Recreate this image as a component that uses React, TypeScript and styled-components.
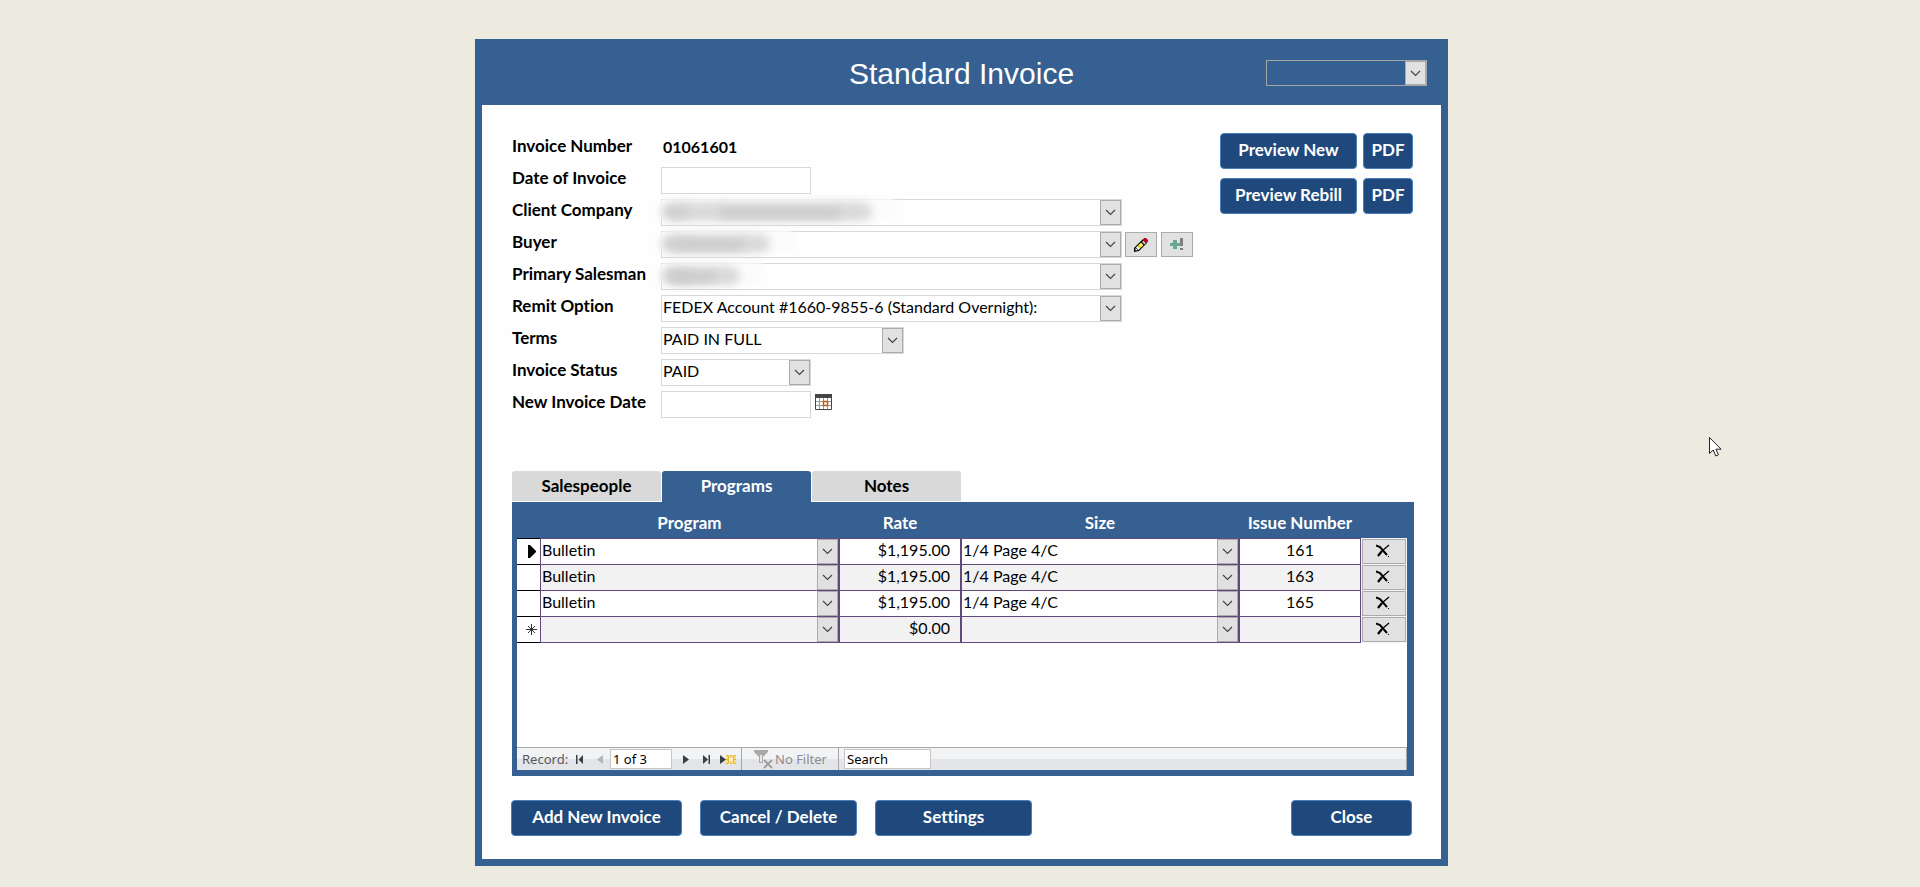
import React from "react";
import styled, { createGlobalStyle } from "styled-components";

const uiFont = `Lato, "Liberation Sans", sans-serif`;
const barFont = `"Noto Sans", "Open Sans", sans-serif`;
const blue = "#376092";
const purple = "#604a7b";

const GlobalStyle = createGlobalStyle`
  *, *::before, *::after { box-sizing: border-box; }
  body {
    margin: 0;
    background: #edeadf;
    color: #000;
    font-family: ${uiFont};
    font-size: 16px;
    font-variant-ligatures: none;
  }
  button, input, select { font: inherit; font-variant-ligatures: none; color: inherit; margin: 0; border-radius: 0; }
`;

const Page = styled.main`
  position: relative;
  min-height: 100vh;
  padding: 39px 0 21px 3px;
`;

const Frame = styled.section`
  width: 100%;
  max-width: 973px;
  margin: 0 auto;
  background: ${blue};
  padding: 0 7px 7px;
`;

const Header = styled.header`
  display: grid;
  grid-template-columns: 161px 1fr 161px;
  align-items: center;
  height: 66px;
  padding: 2px 14px 0;
`;

const Title = styled.h1`
  grid-column: 2;
  margin: 0;
  padding-top: 2px;
  text-align: center;
  color: #fff;
  font: 400 30px/34px "Liberation Sans", Arial, sans-serif;
`;

const Body = styled.div`
  background: #fefefe;
  padding: 28px 27px 23px 30px;
`;

const Top = styled.div`
  display: flex;
  justify-content: space-between;
  align-items: flex-start;
`;

const Fields = styled.form`
  display: grid;
  gap: 5px;
  padding-top: 2px;
`;

const FieldRow = styled.div`
  display: flex;
  align-items: center;
  height: 27px;
`;

const Label = styled.label`
  width: 149px;
  flex: none;
  font-size: 17px;
  font-weight: 700;
  line-height: 20px;
  padding-bottom: 5px;
`;

const Value = styled.output`
  font-weight: 700;
  padding: 0 0 4px 2px;
`;

const TextBox = styled.input`
  width: 150px;
  height: 27px;
  padding: 0 2px;
  border: 1px solid #d8d8d8;
  background: #fff;
`;

const ComboBox = styled.span<{ $width?: number; $tone?: "field" | "header" | "cell" }>`
  position: relative;
  display: grid;
  width: ${(p) => (p.$width ? `${p.$width}px` : "100%")};
  height: ${(p) => (p.$tone === "cell" ? 25 : p.$tone === "header" ? 26 : 27)}px;
  border: ${(p) => (p.$tone === "cell" ? "0" : p.$tone === "header" ? "1px solid #a6a6a6" : "1px solid #d8d8d8")};

  > * { grid-area: 1 / 1; }
`;

const Select = styled.select`
  appearance: none;
  width: 100%;
  height: 100%;
  padding: 0 22px 4px 1px;
  border: 0;
  background: transparent;
`;

const DropButton = styled.span`
  justify-self: end;
  display: grid;
  place-items: center;
  width: 21px;
  height: 100%;
  border: 1px solid #ababab;
  background: #e1e1e1;
  pointer-events: none;
`;

const Smudge = styled.svg`
  position: absolute;
  left: -16px;
  top: -14px;
  pointer-events: none;
`;

const ToolButton = styled.button`
  display: grid;
  place-items: center;
  width: 32px;
  height: 25px;
  margin-left: 3px;
  padding: 0;
  border: 1px solid #ababab;
  background: #e1e1e1;
  & + & { margin-left: 4px; }
`;

const CalendarButton = styled.button`
  display: grid;
  margin: 0 0 6px 4px;
  padding: 0;
  border: 0;
  background: none;
`;

const PreviewGrid = styled.div`
  display: grid;
  grid-template-columns: 137px 50px;
  gap: 9px 6px;
  margin: 0 1px 0 0;
`;

const ActionButton = styled.button<{ $width?: number }>`
  width: ${(p) => (p.$width ? `${p.$width}px` : "100%")};
  height: 36px;
  padding: 0 0 4px;
  border: 1px solid #4a7ebb;
  border-radius: 4px;
  background: #1f497d;
  color: #fff;
  font-size: 17px;
  font-weight: 700;
`;

const Tabs = styled.div`
  display: flex;
  gap: 1px;
  margin-top: 53px;
`;

const Tab = styled.button<{ $active?: boolean }>`
  width: 149px;
  height: ${(p) => (p.$active ? 31 : 30)}px;
  padding: 0 0 ${(p) => (p.$active ? 3 : 2)}px;
  border: 0;
  border-radius: 3px 3px 0 0;
  background: ${(p) => (p.$active ? blue : "#d9d9d9")};
  color: ${(p) => (p.$active ? "#fff" : "#000")};
  font-size: 17px;
  font-weight: 700;
`;

const Panel = styled.div`
  background: ${blue};
  padding: 0 7px 6px 5px;
`;

const Sheet = styled.div`
  min-height: 245px;
  background: linear-gradient(${blue} 36px, #fefefe 36px);
`;

const Grid = styled.table`
  width: 100%;
  table-layout: fixed;
  border-collapse: separate;
  border-spacing: 0;
`;

const HeadCell = styled.th<{ $width?: number }>`
  width: ${(p) => (p.$width ? `${p.$width}px` : "auto")};
  height: 36px;
  padding: 4px 0 0;
  color: #fff;
  font-size: 17px;
  font-weight: 700;
`;

const Row = styled.tr<{ $alt: boolean }>`
  background: ${(p) => (p.$alt ? "#f2f2f2" : "#fefefe")};
  &:first-child > td { border-top-width: 1px; }
`;

const Cell = styled.td`
  height: 25px;
  padding: 0;
  border: solid ${purple};
  border-width: 0 1px 1px;
`;

const SelectorCell = styled(Cell)`
  padding-left: 9px;
  border-color: #000;
  border-width: 0 0 1px;
  background: #fefefe;
`;

const DeleteCell = styled(Cell)`
  border-color: #f5f5f5;
`;

const CellInput = styled.input<{ $align: "right" | "center" }>`
  display: block;
  width: 100%;
  height: 25px;
  padding: 0 ${(p) => (p.$align === "right" ? "10px" : "0")} 4px 0;
  border: 0;
  background: transparent;
  text-align: ${(p) => p.$align};
`;

const DeleteButton = styled.button`
  display: grid;
  place-items: center;
  width: 100%;
  height: 25px;
  padding: 0 2px 2px 0;
  border: 1px solid #ababab;
  background: #e1e1e1;
`;

const RecordBar = styled.div`
  display: flex;
  align-items: center;
  height: 23px;
  padding-left: 5px;
  border: solid #a6a8ab;
  border-width: 1px 1px 0 0;
  background: linear-gradient(#f2f3f5 11px, #e4e5e9 11px);
  color: #55585c;
  font: 13px/18px ${barFont};
`;

const RecordText = styled.label`
  width: 54px;
`;

const NavButton = styled.button<{ $width: number; $indent?: number }>`
  display: grid;
  justify-content: start;
  align-items: center;
  width: ${(p) => p.$width}px;
  height: 20px;
  padding: 0 0 0 ${(p) => p.$indent ?? 0}px;
  border: 0;
  background: none;
`;

const BarInput = styled.input<{ $width: number }>`
  width: ${(p) => p.$width}px;
  height: 20px;
  padding: 0 2px;
  border: 1px solid #c6c6c6;
  background: #fefefe;
  color: #000;
  &::placeholder { color: #000; opacity: 1; }
`;

const FilterButton = styled.button`
  display: flex;
  align-items: center;
  gap: 1px;
  width: 98px;
  height: 22px;
  margin-right: 5px;
  padding: 0 0 0 12px;
  border: solid #a6a8ab;
  border-width: 0 1px;
  background: none;
  color: #8b8d90;
`;

const Footer = styled.footer`
  display: flex;
  gap: 18px;
  margin: 24px 2px 0 -1px;
  > :last-child { margin-left: auto; }
`;

const Pointer = styled.svg`
  position: absolute;
  left: 1709px;
  top: 437px;
`;

const Chevron = () => (
  <svg width="11" height="7" viewBox="0 0 11 7" fill="none" aria-hidden="true">
    <path d="M1 1 L5.5 5.5 L10 1" stroke="#444" strokeWidth="1.2" />
  </svg>
);

const Pencil = () => (
  <svg width="14" height="14" viewBox="0 0 14 14" aria-hidden="true">
    <path d="M0 10 L9 1 L13 5 L5 13 L0 14Z" fill="#000" />
    <path d="M1.500 10 L4 12 L1.500 12.500Z" fill="#fff" />
    <path d="M2 9.500 L3.500 8 L6 10.500 L4.500 12Z" fill="#fff" />
    <path d="M3.500 8 L7 4.500 L9.500 7 L6 10.500Z" fill="#f0e420" />
    <path d="M5 7.500 L7 5.500 L9 7.500 L8 8.500Z" fill="#fff36a" />
    <path d="M8 4 L9.500 2.500 L12 5 L10.500 6.500Z" fill="#c8c8d0" />
    <path d="M9 2 L10 0 H12 L14 2 V4 L12 5Z" fill="#c00014" />
  </svg>
);

const PlusBang = () => (
  <svg width="15" height="13" viewBox="0 0 15 13" aria-hidden="true">
    <path d="M3 2h4v3h3v3H7v3H3V8H0V5h3z" fill="#67a892" />
    <path d="M10 0h3v8h-3zM10 10h3v2h-3z" fill="#808080" />
  </svg>
);

const Calendar = () => (
  <svg width="17" height="16" viewBox="0 0 17 16" aria-hidden="true">
    <path d="M.5.5h16v15H.5z" fill="#fff" stroke="#444" />
    <path d="M0 0h17v4H0z" fill="#444" />
    <path d="M4.500 4v11M8.500 4v11M12.500 4v11M1 7.500h15M1 11.500h15" stroke="#999" />
    <path d="M8.500 7.500h4v4h-4z" fill="#fff" stroke="#c55a11" strokeWidth="1.500" />
  </svg>
);

const DeleteMark = () => (
  <svg width="14" height="14" viewBox="0 0 14 14" fill="none" stroke="#000" aria-hidden="true">
    <path d="M0 1.500 L4 3 L11 11" strokeWidth="2" />
    <path d="M13 1 L6 7" strokeWidth="1.2" />
    <path d="M6 7 L2 12" strokeWidth="2.2" />
    <path d="M12 12.500h1" />
  </svg>
);

const CurrentMark = () => (
  <svg width="12" height="13" viewBox="0 0 12 13" aria-hidden="true">
    <path d="M2 0h2l6 6v1l-6 6H2z" fill="#000" />
  </svg>
);

const NewMark = () => (
  <svg width="12" height="12" viewBox="0 0 12 12" stroke="#333" aria-hidden="true">
    <path d="M5.500 0v11M0 5.500h11M2 2l7 7M9 2l-7 7" />
  </svg>
);

const FilterMark = () => (
  <svg width="20" height="20" viewBox="0 0 20 20" aria-hidden="true">
    <path d="M0 1h14v2L9 8v6H5V8L0 3z" fill="#a9a9a9" />
    <path d="M6 6h2v7H6z" fill="#e8e8e8" />
    <path d="M10 11l8 8M18 11l-8 8" stroke="#a0a0a0" strokeWidth="2" />
  </svg>
);

type NavKind = "first" | "prev" | "next" | "last" | "new";
const navPaths: Record<NavKind, string> = {
  first: "M0 0h1.500v9H0zM7 0v9L2.500 4.500z",
  prev: "M6 0v9L0 4.500z",
  next: "M0 0v9L6 4.500z",
  last: "M0 0v9L5 4.500zM5.500 0h1.500v9H5.500z",
  new: "M0 0v9L6 4.500z",
};

const NavMark = ({ kind }: { kind: NavKind }) => (
  <svg width="16" height="9" viewBox="0 0 16 9" aria-hidden="true">
    <path d={navPaths[kind]} fill={kind === "prev" ? "#b4b6ba" : "#3b3e44"} />
    {kind === "new" && (
      <>
        <path d="M6 0h10v9H6z" fill="#f6dc8a" />
        <path d="M6 .5h2M10 .5h2M14 .5h2M6 8.500h2M10 8.500h2M14 8.500h2M6 4.500h10M8.500 1v7M13.500 1v7" stroke="#e3b52c" />
        <path d="M9 3h4v3H9z" fill="#fff3c0" />
      </>
    )}
  </svg>
);

const Redacted = ({ id, width }: { id: string; width: number }) => (
  <Smudge width={width + 70} height="52" aria-hidden="true">
    <defs>
      <filter id={`${id}-halo`} x="-20%" y="-50%" width="140%" height="200%">
        <feGaussianBlur stdDeviation="2" />
      </filter>
      <filter id={`${id}-ink`} x="-30%" y="-100%" width="160%" height="300%">
        <feGaussianBlur stdDeviation="5 4" />
      </filter>
    </defs>
    <rect x="12" y="12" width={width + 34} height="23" rx="11" fill="#fcfcfc" filter={`url(#${id}-halo)`} />
    <rect x="16" y="16" width={width + 4} height="19" rx="9" fill="#dadada" filter={`url(#${id}-ink)`} />
    <rect x="20" y="21" width="24" height="11" rx="5" fill="#cfcfcf" filter={`url(#${id}-ink)`} />
    <rect x={width * 0.35} y="22" width={width * 0.6} height="10" rx="5" fill="#cccccc" filter={`url(#${id}-ink)`} />
  </Smudge>
);

type ComboProps = {
  id?: string;
  name: string;
  value?: string;
  width?: number;
  tone?: "field" | "header" | "cell";
  redacted?: number;
};

const Combo = ({ id, name, value = "", width, tone = "field", redacted }: ComboProps) => (
  <ComboBox $width={width} $tone={tone}>
    <Select id={id} aria-label={name} defaultValue={value}>
      <option value={value}>{value}</option>
    </Select>
    <DropButton><Chevron /></DropButton>
    {redacted && <Redacted id={`${id}-redacted`} width={redacted} />}
  </ComboBox>
);

type Field = { id: string; label: string; value?: string; width?: number; redacted?: number; kind: "value" | "text" | "combo" };
const fields: Field[] = [
  { id: "number", label: "Invoice Number", value: "01061601", kind: "value" },
  { id: "date", label: "Date of Invoice", kind: "text" },
  { id: "client", label: "Client Company", width: 461, redacted: 206, kind: "combo" },
  { id: "buyer", label: "Buyer", width: 461, redacted: 104, kind: "combo" },
  { id: "salesman", label: "Primary Salesman", width: 461, redacted: 74, kind: "combo" },
  { id: "remit", label: "Remit Option", value: "FEDEX Account #1660-9855-6 (Standard Overnight):", width: 461, kind: "combo" },
  { id: "terms", label: "Terms", value: "PAID IN FULL", width: 243, kind: "combo" },
  { id: "status", label: "Invoice Status", value: "PAID", width: 150, kind: "combo" },
  { id: "new-date", label: "New Invoice Date", kind: "text" },
];

const programs = [
  { program: "Bulletin", rate: "$1,195.00", size: "1/4 Page 4/C", issue: "161" },
  { program: "Bulletin", rate: "$1,195.00", size: "1/4 Page 4/C", issue: "163" },
  { program: "Bulletin", rate: "$1,195.00", size: "1/4 Page 4/C", issue: "165" },
  { program: "", rate: "$0.00", size: "", issue: "" },
];

export default function App() {
  return (
    <Page>
      <GlobalStyle />
      <Frame>
        <Header>
          <Title>Standard Invoice</Title>
          <Combo name="Find invoice" width={161} tone="header" />
        </Header>
        <Body>
          <Top>
            <Fields>
              {fields.map((f) => (
                <FieldRow key={f.id}>
                  <Label htmlFor={f.id}>{f.label}</Label>
                  {f.kind === "value" && <Value id={f.id}>{f.value}</Value>}
                  {f.kind === "text" && <TextBox id={f.id} />}
                  {f.kind === "combo" && (
                    <Combo id={f.id} name={f.label} value={f.value} width={f.width} redacted={f.redacted} />
                  )}
                  {f.id === "buyer" && (
                    <>
                      <ToolButton type="button" aria-label="Edit buyer"><Pencil /></ToolButton>
                      <ToolButton type="button" aria-label="Add buyer"><PlusBang /></ToolButton>
                    </>
                  )}
                  {f.id === "new-date" && (
                    <CalendarButton type="button" aria-label="Choose date"><Calendar /></CalendarButton>
                  )}
                </FieldRow>
              ))}
            </Fields>
            <PreviewGrid>
              <ActionButton>Preview New</ActionButton>
              <ActionButton>PDF</ActionButton>
              <ActionButton>Preview Rebill</ActionButton>
              <ActionButton>PDF</ActionButton>
            </PreviewGrid>
          </Top>

          <Tabs role="tablist">
            <Tab role="tab">Salespeople</Tab>
            <Tab role="tab" aria-selected="true" $active>Programs</Tab>
            <Tab role="tab">Notes</Tab>
          </Tabs>
          <Panel>
            <Sheet>
              <Grid>
                <thead>
                  <tr>
                    <HeadCell $width={23} aria-label="Selector" />
                    <HeadCell>Program</HeadCell>
                    <HeadCell $width={122}>Rate</HeadCell>
                    <HeadCell $width={278}>Size</HeadCell>
                    <HeadCell $width={122}>Issue Number</HeadCell>
                    <HeadCell $width={46} aria-label="Delete" />
                  </tr>
                </thead>
                <tbody>
                  {programs.map((p, i) => (
                    <Row key={i} $alt={i % 2 === 1}>
                      <SelectorCell>
                        {i === 0 && <CurrentMark />}
                        {i === programs.length - 1 && <NewMark />}
                      </SelectorCell>
                      <Cell><Combo name="Program" value={p.program} tone="cell" /></Cell>
                      <Cell><CellInput aria-label="Rate" $align="right" defaultValue={p.rate} /></Cell>
                      <Cell><Combo name="Size" value={p.size} tone="cell" /></Cell>
                      <Cell><CellInput aria-label="Issue Number" $align="center" defaultValue={p.issue} /></Cell>
                      <DeleteCell><DeleteButton aria-label="Delete row"><DeleteMark /></DeleteButton></DeleteCell>
                    </Row>
                  ))}
                </tbody>
              </Grid>
            </Sheet>
            <RecordBar>
              <RecordText htmlFor="record">Record:</RecordText>
              <NavButton $width={21} aria-label="First record"><NavMark kind="first" /></NavButton>
              <NavButton $width={13} aria-label="Previous record"><NavMark kind="prev" /></NavButton>
              <BarInput id="record" $width={62} defaultValue="1 of 3" />
              <NavButton $width={31} $indent={11} aria-label="Next record"><NavMark kind="next" /></NavButton>
              <NavButton $width={17} aria-label="Last record"><NavMark kind="last" /></NavButton>
              <NavButton $width={21} aria-label="New record"><NavMark kind="new" /></NavButton>
              <FilterButton><FilterMark />No Filter</FilterButton>
              <BarInput aria-label="Search" $width={87} placeholder="Search" />
            </RecordBar>
          </Panel>

          <Footer>
            <ActionButton $width={171}>Add New Invoice</ActionButton>
            <ActionButton $width={157}>Cancel / Delete</ActionButton>
            <ActionButton $width={157}>Settings</ActionButton>
            <ActionButton $width={121}>Close</ActionButton>
          </Footer>
        </Body>
      </Frame>
      <Pointer width="13" height="20" viewBox="0 0 13 20" aria-hidden="true">
        <path d="M.5.5v16l3.700-3.500 2.600 6 2.600-1.200-2.500-5.600h5.100z" fill="#fff" stroke="#222230" />
      </Pointer>
    </Page>
  );
}
